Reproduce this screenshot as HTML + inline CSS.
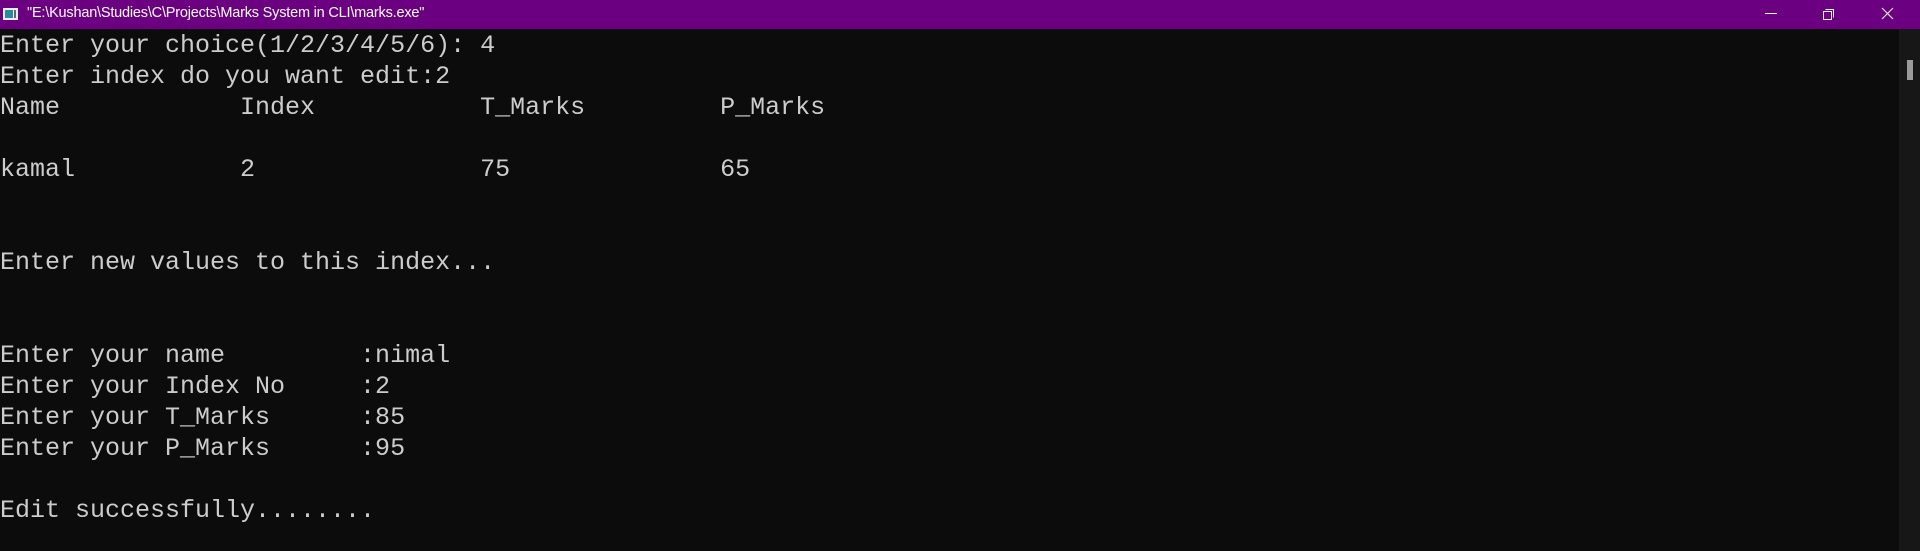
<!DOCTYPE html>
<html><head><style>
html,body{margin:0;padding:0;width:1920px;height:551px;overflow:hidden;background:#0c0c0c;}
.tb{position:absolute;left:0;top:0;width:1920px;height:29px;background:#6b0080;}
.title{position:absolute;left:27px;top:5px;color:#fff;font:14.5px "Liberation Sans",sans-serif;letter-spacing:-0.2px;}
.ico{position:absolute;left:3px;top:8px;width:15px;height:12px;background:#e8eef4;}
.ico:before{content:"";position:absolute;left:2px;top:2px;width:8px;height:8px;background:#2a8a9e;}
.ico:after{content:"";position:absolute;left:11px;top:2px;width:2px;height:8px;background:#666;}
.sb{position:absolute;right:0;top:29px;width:21px;height:522px;background:#171717;}
.th{position:absolute;left:1907px;top:60px;width:6px;height:20px;background:#9a9a9a;}
pre{position:absolute;left:0;top:30px;margin:0;color:#cccccc;font:25px/31px "Liberation Mono","DejaVu Sans Mono",monospace;}
</style></head><body>
<div class="tb"><div class="ico"></div><div class="title">"E:\Kushan\Studies\C\Projects\Marks System in CLI\marks.exe"</div>
<svg style="position:absolute;left:1760px;top:7px" width="150" height="16" fill="none" stroke="#fff" stroke-width="1">
<line x1="5" y1="6.5" x2="17" y2="6.5"/>
<rect x="63.5" y="4.5" width="8" height="8"/><path d="M65.5 2.5h8v8"/>
<path d="M122 1l11 11M133 1l-11 11"/></svg></div>
<div class="sb"></div><div class="th"></div>
<pre>Enter your choice(1/2/3/4/5/6): 4
Enter index do you want edit:2
Name            Index           T_Marks         P_Marks

kamal           2               75              65


Enter new values to this index...


Enter your name         :nimal
Enter your Index No     :2
Enter your T_Marks      :85
Enter your P_Marks      :95

Edit successfully........</pre>
</body></html>
